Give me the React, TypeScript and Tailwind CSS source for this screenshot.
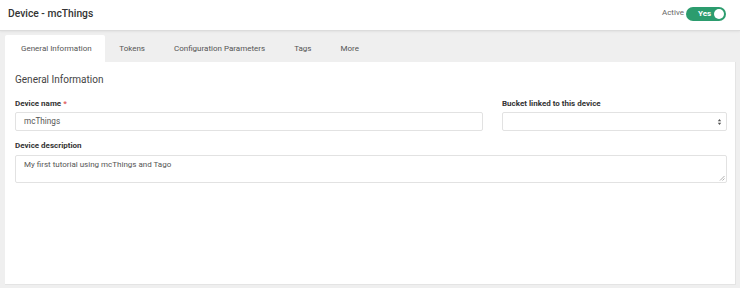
import React from 'react';

const TABS = ['General Information', 'Tokens', 'Configuration Parameters', 'Tags', 'More'];

export default function App() {
  return (
    <div className="w-[740px] h-[288px] bg-[#efefef] overflow-hidden text-[#333]" style={{ fontFamily: 'Roboto, "Liberation Sans", sans-serif' }}>
      <div className="h-[31px] bg-white flex items-center justify-between pl-[8px] pr-[14px] border-b border-[#dcdcdc] shadow-[0_1px_2px_rgba(0,0,0,0.06)]">
        <div className="text-[10.3px] font-medium text-[#333] leading-[14px] mt-[-2px]">Device - mcThings</div>
        <div className="flex items-center gap-[2px] mt-[-3px]">
          <span className="text-[8px] text-[#666] leading-[10px] mt-[-2px]">Active</span>
          <div className="relative w-[40px] h-[14px] rounded-full bg-[#2c9c6e]">
            <span className="absolute left-[12px] top-[2px] text-[8px] font-bold text-white leading-[10px]">Yes</span>
            <span className="absolute right-[2px] top-[2px] w-[10px] h-[10px] rounded-full bg-white" />
          </div>
        </div>
      </div>

      <div className="flex pl-[5px] mt-[4px] h-[27px] items-stretch">
        {TABS.map((t, i) => (
          <div
            key={t}
            className={
              i === 0
                ? 'bg-white pl-[16px] pr-[13px] flex items-center text-[8px] text-[#555] rounded-t-[2px]'
                : 'px-[14.5px] flex items-center text-[8px] text-[#555]'
            }
          >
            {t}
          </div>
        ))}
      </div>

      <div className="ml-[5px] mr-[4px] h-[223px] bg-white pl-[10px] pr-[8px] pt-[11px] border-b border-r border-[#e4e4e4]">
        <div className="text-[10px] leading-[14px] text-[#444]">General Information</div>

        <div className="flex gap-[19px] mt-[11px]">
          <div className="w-[468px] shrink-0">
            <div className="text-[8px] leading-[11px] font-bold text-[#333]">Device name <span className="text-[#e0595b]">*</span></div>
            <div className="mt-[3px] h-[19px] border border-[#e2e2e2] rounded-[2px] flex items-center px-[8px] text-[8.2px] text-[#555]">mcThings</div>
          </div>
          <div className="w-[225px] shrink-0">
            <div className="text-[8px] leading-[11px] font-bold text-[#333]">Bucket linked to this device</div>
            <div className="mt-[3px] h-[19px] border border-[#e2e2e2] rounded-[2px] flex items-center justify-end pr-[4px]">
              <svg width="5" height="8" viewBox="0 0 5 8">
                <path d="M0.8 3.2 L2.5 1 L4.2 3.2 Z M0.8 4.8 L2.5 7 L4.2 4.8 Z" fill="#555" />
              </svg>
            </div>
          </div>
        </div>

        <div className="mt-[9px]">
          <div className="text-[8px] leading-[11px] font-bold text-[#333]">Device description</div>
          <div className="relative mt-[4px] w-[712px] h-[28px] border border-[#e2e2e2] rounded-[2px] px-[8px] pt-[4px] text-[8px] leading-[10px] text-[#555]">
            My first tutorial using mcThings and Tago
            <svg className="absolute right-[1px] bottom-[1px]" width="6" height="6" viewBox="0 0 6 6">
              <path d="M5.5 1 L1 5.5 M5.5 3.5 L3.5 5.5" stroke="#999" strokeWidth="0.8" />
            </svg>
          </div>
        </div>
      </div>
    </div>
  );
}
